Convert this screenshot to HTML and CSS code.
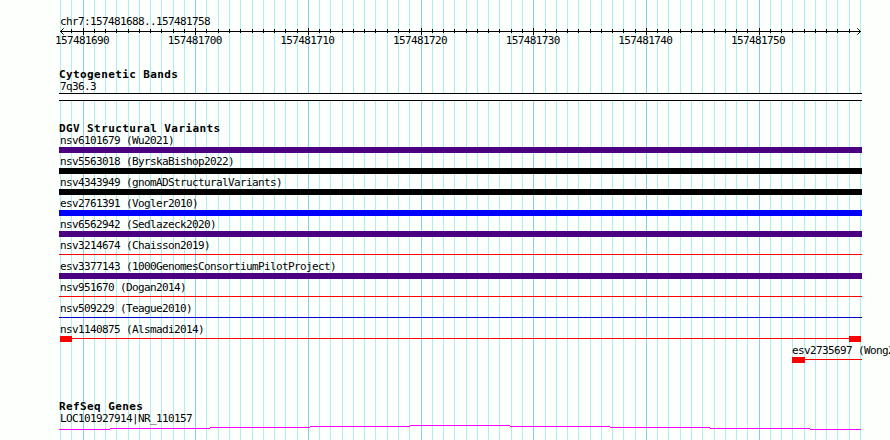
FILE: index.html
```
<!DOCTYPE html>
<html lang="en">
<head>
<meta charset="utf-8">
<title>chr7:157481688..157481758</title>
<link rel="stylesheet" href="styles.css">
</head>
<body>
<main class="browser">
  <svg class="grid" width="890" height="440" aria-hidden="true"><path id="minor" class="minor"/><path id="major" class="major"/></svg>
  <section class="ruler">
    <div class="label">chr7:157481688..157481758</div>
    <svg class="axis" width="890" height="9" aria-hidden="true">
      <path d="M60 4.5H861"/>
      <path id="ticks"/>
      <path class="arrow" d="M63.7 1.3L60.5 4.5l3.2 3.2M857.3 1.3l3.2 3.2l-3.2 3.2"/>
    </svg>
    <div class="numbers"><span>157481690</span><span>157481700</span><span>157481710</span><span>157481720</span><span>157481730</span><span>157481740</span><span>157481750</span></div>
  </section>
  <section class="cyto">
    <h2>Cytogenetic Bands</h2>
    <div class="label">7q36.3</div>
    <div class="band"></div>
  </section>
  <section class="variants">
    <h2>DGV Structural Variants</h2>
    <div class="row"><div class="label">nsv6101679 (Wu2021)</div><div class="bar purple"></div></div>
    <div class="row"><div class="label">nsv5563018 (ByrskaBishop2022)</div><div class="bar black"></div></div>
    <div class="row"><div class="label">nsv4343949 (gnomADStructuralVariants)</div><div class="bar black"></div></div>
    <div class="row"><div class="label">esv2761391 (Vogler2010)</div><div class="bar blue"></div></div>
    <div class="row"><div class="label">nsv6562942 (Sedlazeck2020)</div><div class="bar purple"></div></div>
    <div class="row"><div class="label">nsv3214674 (Chaisson2019)</div><div class="line red"></div></div>
    <div class="row"><div class="label">esv3377143 (1000GenomesConsortiumPilotProject)</div><div class="bar purple"></div></div>
    <div class="row"><div class="label">nsv951670 (Dogan2014)</div><div class="line red"></div></div>
    <div class="row"><div class="label">nsv509229 (Teague2010)</div><div class="line navy"></div></div>
    <div class="row"><div class="label">nsv1140875 (Alsmadi2014)</div><div class="span both"><i class="cap"></i><i class="link"></i><i class="cap"></i></div></div>
    <div class="row last"><div class="label">esv2735697 (Wong2</div><div class="span"><i class="cap wide"></i><i class="link"></i></div></div>
  </section>
  <section class="genes">
    <h2>RefSeq Genes</h2>
    <div class="label">LOC101927914|NR_110157</div>
    <svg class="gene" width="890" height="5" aria-hidden="true"><path d="M59 4.5H110M110 3.5H210M210 2.5H310M310 1.5H410M410 .5H510M510 1.5H610M610 2.5H710M710 3.5H810M810 4.5H861"/></svg>
  </section>
</main>
<script src="grid.js"></script>
</body>
</html>
```
FILE: grid.js
```
let minor = "", major = "", ticks = "";
for (let i = 0; i <= 71; i++) {
  const x = 60.5 + Math.round(i * 800 / 71);
  const isMajor = i % 10 === 2;
  if (isMajor) major += `M${x} 0V440`;
  else minor += `M${x} 0V440`;
  if (i > 0 && i < 71) ticks += isMajor ? `M${x} 1V8` : `M${x} 2V6`;
}
document.getElementById("minor").setAttribute("d", minor);
document.getElementById("major").setAttribute("d", major);
document.getElementById("ticks").setAttribute("d", ticks);
```
FILE: styles.css
```
* { box-sizing: border-box; }
body { margin: 0; background: #fdfffc; }
.browser {
  position: relative;
  width: 890px;
  height: 440px;
  overflow: hidden;
  color: #000;
  font: 11px/14px "DejaVu Sans Mono", monospace;
  letter-spacing: -0.622px;
  white-space: nowrap;
}
svg { display: block; fill: none; shape-rendering: crispEdges; }
.grid { position: absolute; inset: 0; z-index: -1; }
.minor { stroke: #afeeee; }
.major { stroke: #87ceeb; }
section { display: flow-root; }
h2 {
  margin: 0 0 0 59px;
  height: 12px;
  font-size: 11px;
  line-height: 14px;
  font-weight: bold;
  letter-spacing: 0.4px;
}
.label { height: 12px; padding-left: 60px; }
.ruler { height: 68px; padding-top: 15px; }
.axis { stroke: #000; }
.arrow { shape-rendering: auto; }
.numbers {
  display: grid;
  grid-template-columns: repeat(7, 112.68px);
  margin: -2px 0 0 55px;
}
.cyto { height: 54px; }
.band {
  width: 803px;
  height: 8px;
  margin: 1px 0 0 59px;
  border: solid #000;
  border-width: 1px 0;
  background: #fff;
}
.variants { height: 278px; }
.row { height: 21px; }
.row .label { height: 13px; }
.bar { width: 803px; height: 6px; margin-left: 59px; }
.purple { background: #4b0082; }
.black { background: #000; }
.blue { background: #00f; }
.line { width: 803px; height: 1px; margin: 2px 0 0 59px; }
.red { background: #f00; }
.navy { background: #0000cd; }
.span { display: flex; width: 70px; margin-left: 792px; }
.both { width: 801px; margin-left: 60px; }
.cap { width: 12px; height: 6px; background: #f00; }
.wide { width: 13px; }
.link { flex: 1; height: 1px; margin-top: 2px; background: #f00; }
.last .label { padding-left: 792px; }
.gene { stroke: #f0f; margin-top: 1px; }
```
